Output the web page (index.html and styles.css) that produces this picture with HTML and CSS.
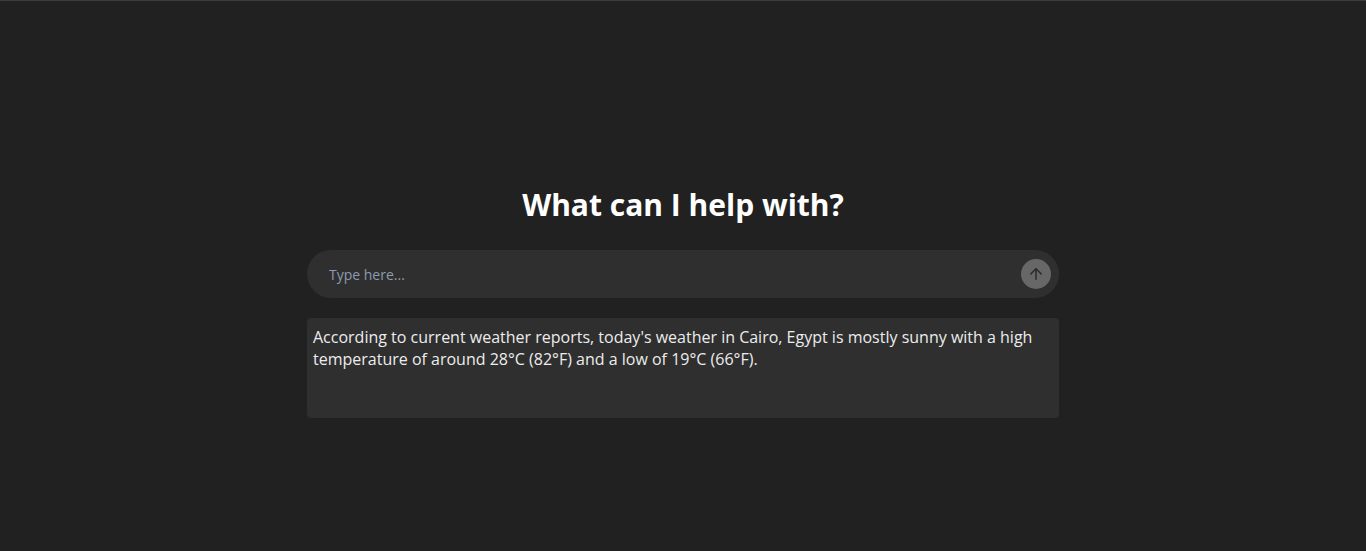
FILE: index.html
```html
<!DOCTYPE html>
<html lang="en">
<head>
<meta charset="utf-8">
<title>What can I help with?</title>
<link rel="stylesheet" href="styles.css">
</head>
<body>
<main class="page">
  <h1 class="title">What can I help with?</h1>
  <form class="prompt">
    <input class="prompt-input" type="text" placeholder="Type here...">
    <button class="send" type="button" aria-label="Send">
      <svg width="18" height="18" viewBox="0 0 24 24" fill="none" stroke="currentColor" stroke-width="2" stroke-linecap="round" stroke-linejoin="round"><path d="M12 19V5"/><path d="M5 12l7-7 7 7"/></svg>
    </button>
  </form>
  <div class="answer">According to current weather reports, today's weather in Cairo, Egypt is mostly sunny with a high temperature of around 28°C (82°F) and a low of 19°C (66°F).</div>
</main>
</body>
</html>
```
FILE: styles.css
```css
* { box-sizing: border-box; }
html, body { margin: 0; height: 100%; }
body {
  background: #212121;
  border-top: 1px solid #3c3c3c;
  font-family: "Open Sans", "Noto Sans", sans-serif;
  color: #ececec;
}
.page {
  width: 752px;
  margin: 0 auto;
  padding-top: 180px;
  display: flex;
  flex-direction: column;
}
.title {
  margin: 0 0 21px;
  text-align: center;
  font-size: 30px;
  font-weight: 700;
  line-height: 48px;
  color: #ffffff;
}
.prompt {
  margin: 0;
  height: 48px;
  background: #2f2f2f;
  border-radius: 24px;
  display: flex;
  align-items: center;
  padding: 0 8px 0 20px;
  gap: 4px;
}
.prompt-input {
  flex: 1;
  height: 38px;
  background: transparent;
  border: none;
  outline: none;
  font-family: inherit;
  font-size: 14px;
  color: #ececec;
  padding: 0 2px;
}
.prompt-input::placeholder { color: #8d9bb0; }
.send {
  width: 30px;
  height: 30px;
  border-radius: 50%;
  border: none;
  padding: 0;
  background: #676767;
  color: #2a2a2a;
  display: flex;
  align-items: center;
  justify-content: center;
}
.answer {
  margin-top: 20px;
  min-height: 100px;
  background: #2f2f2f;
  border-radius: 4px;
  padding: 8px 6px;
  font-size: 16px;
  line-height: 22px;
  color: #ececec;
}
```
